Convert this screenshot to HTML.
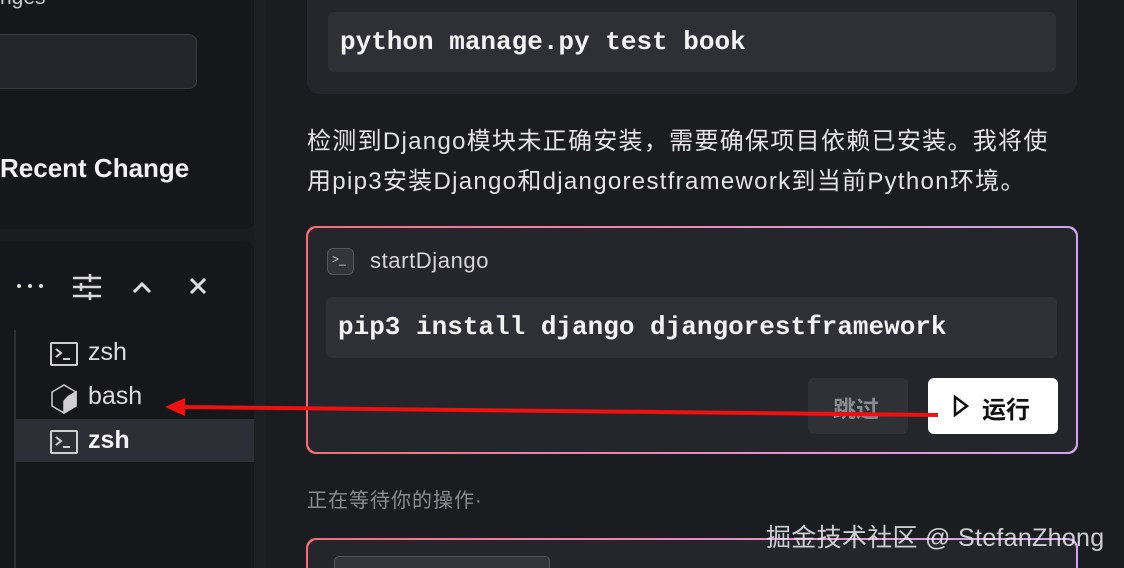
<!DOCTYPE html>
<html style="width:1124px;height:568px;overflow:hidden"><head><meta charset="utf-8"><style>
*{margin:0;padding:0;box-sizing:border-box}
body{width:1124px;height:568px;overflow:hidden;background:#1b1c20;font-family:"Liberation Sans","Noto Sans CJK SC",sans-serif;color:#e6e6e8;position:relative}
.abs{position:absolute}
.mono{font-family:"Liberation Mono","DejaVu Sans Mono",monospace;font-weight:bold}
</style></head><body>
<div class="abs" style="left:0;top:0;width:254px;height:229px;background:#16171b;border-radius:0 0 8px 0"></div>
<div class="abs" style="left:0;top:0;width:60px;height:14px;overflow:hidden"><div style="margin-top:-14px;font-size:21px;color:#c8c8cc">nges</div></div>
<div class="abs" style="left:-10px;top:34px;width:207px;height:55px;background:#25262b;border:1px solid #3a3b41;border-radius:8px"></div>
<div class="abs" style="left:0;top:153px;font-size:26px;font-weight:bold;color:#f2f2f4">Recent Change</div>
<div class="abs" style="left:0;top:241px;width:254px;height:327px;background:#16171b;border-radius:0 10px 0 0"></div>
<svg class="abs" style="left:16px;top:283px" width="28" height="6"><circle cx="3" cy="3" r="2" fill="#ddd"/><circle cx="14" cy="3" r="2" fill="#ddd"/><circle cx="25" cy="3" r="2" fill="#ddd"/></svg>
<svg class="abs" style="left:72px;top:273px" width="30" height="28" viewBox="0 0 30 28" stroke="#d8d8dc" stroke-width="2.4" fill="none"><path d="M1 5h28M1 14h28M1 23h28"/><path d="M18 1v8M9 10v8M18 19v8" stroke-width="2.6"/></svg>
<svg class="abs" style="left:132px;top:280px" width="20" height="14" viewBox="0 0 20 14" stroke="#e0e0e4" stroke-width="3" fill="none"><path d="M2 12l8-8 8 8"/></svg>
<svg class="abs" style="left:189px;top:277px" width="18" height="18" viewBox="0 0 18 18" stroke="#e0e0e4" stroke-width="3"><path d="M2 2l14 14M16 2L2 16"/></svg>
<div class="abs" style="left:14px;top:330px;width:2px;height:238px;background:#2e2f34"></div>
<div class="abs" style="left:16px;top:419px;width:238px;height:43px;background:#2e2f36"></div>
<svg class="abs" style="left:50px;top:342px" width="28" height="24" viewBox="0 0 28 24" fill="none" stroke="#cfcfd3" stroke-width="2"><rect x="1" y="1" width="26" height="22" rx="1"/><path d="M6 7l5 4-5 4M13 17h7"/></svg>
<div class="abs" style="left:88px;top:338px;font-size:25px;color:#dcdce0">zsh</div>
<svg class="abs" style="left:50px;top:384px" width="28" height="30" viewBox="0 0 28 30" fill="none" stroke="#cfcfd3" stroke-width="1.5"><path d="M14 1l12 7v14l-12 7-12-7V8z"/><path d="M19 12l7-4v14l-12 7V17z" fill="#cfcfd3"/></svg>
<div class="abs" style="left:88px;top:382px;font-size:25px;color:#dcdce0">bash</div>
<svg class="abs" style="left:50px;top:430px" width="28" height="24" viewBox="0 0 28 24" fill="none" stroke="#cfcfd3" stroke-width="2"><rect x="1" y="1" width="26" height="22" rx="1"/><path d="M6 7l5 4-5 4M13 17h7"/></svg>
<div class="abs" style="left:88px;top:426px;font-size:25px;font-weight:bold;color:#f4f4f6">zsh</div>
<div class="abs" style="left:254px;top:0;width:12px;height:568px;background:#1e1f23"></div>
<div class="abs" style="left:307px;top:0;width:770px;height:94px;background:#25262b;border-radius:0 0 12px 12px"></div>
<div class="abs" style="left:328px;top:12px;width:728px;height:60px;background:#2f3036;border-radius:6px"></div>
<div class="abs mono" style="left:340px;top:27px;font-size:26px;color:#f2f2f4">python manage.py test book</div>
<div class="abs" style="left:307px;top:122px;font-size:24px;letter-spacing:1.3px;line-height:40px;color:#e4e4e6;width:800px;white-space:nowrap">检测到Django模块未正确安装，需要确保项目依赖已安装。我将使<br>用pip3安装Django和djangorestframework到当前Python环境。</div>
<div class="abs" style="left:306px;top:226px;width:772px;height:228px;border-radius:10px;background:linear-gradient(90deg,#f0707a,#e890c8 60%,#c8a8f0)"></div>
<div class="abs" style="left:308px;top:228px;width:768px;height:224px;border-radius:9px;background:#25262b"></div>
<div class="abs" style="left:327px;top:248px;width:27px;height:27px;border:1.5px solid #55565d;background:#34353b;border-radius:6px"></div>
<div class="abs" style="left:332px;top:252px;font-size:12px;color:#ccc">&gt;_</div>
<div class="abs" style="left:370px;top:248px;font-size:22px;letter-spacing:0.6px;color:#d6d6da">startDjango</div>
<div class="abs" style="left:326px;top:297px;width:731px;height:61px;background:#2f3036;border-radius:6px"></div>
<div class="abs mono" style="left:338px;top:312px;font-size:26px;color:#f2f2f4">pip3 install django djangorestframework</div>
<div class="abs" style="left:808px;top:378px;width:100px;height:56px;background:#303137;border-radius:6px"></div>
<div class="abs" style="left:833px;top:390px;font-size:23px;font-weight:bold;color:#8a8b90">跳过</div>
<div class="abs" style="left:928px;top:378px;width:130px;height:56px;background:#fff;border-radius:6px"></div>
<svg class="abs" style="left:953px;top:395px" width="16" height="22" viewBox="0 0 16 22" fill="none" stroke="#111" stroke-width="2.5"><path d="M2 2l12 9-12 9z"/></svg>
<div class="abs" style="left:982px;top:390px;font-size:24px;font-weight:bold;color:#111">运行</div>
<svg class="abs" style="left:0;top:0" width="1124" height="568"><line x1="180" y1="407" x2="938" y2="415" stroke="#f01010" stroke-width="4"/><path d="M165 407l20-9v18z" fill="#f01010"/></svg>
<div class="abs" style="left:307px;top:484px;font-size:20px;letter-spacing:1px;color:#8a8b90">正在等待你的操作·</div>
<div class="abs" style="left:306px;top:538px;width:772px;height:30px;overflow:hidden">
 <div style="position:absolute;left:0;top:0;width:772px;height:60px;border-radius:10px;background:linear-gradient(90deg,#f0707a,#e890c8 60%,#c8a8f0)"></div>
 <div style="position:absolute;left:2px;top:2px;width:768px;height:60px;border-radius:9px;background:#25262b"></div>
 <div style="position:absolute;left:28px;top:18px;width:216px;height:30px;border:1.5px solid #55565d;background:#34353b;border-radius:5px"></div>
</div>
<div class="abs" style="left:766px;top:518px;font-size:25px;letter-spacing:0.3px;color:rgba(235,235,240,.85)">掘金技术社区 @ StefanZhong</div>
</body></html>
